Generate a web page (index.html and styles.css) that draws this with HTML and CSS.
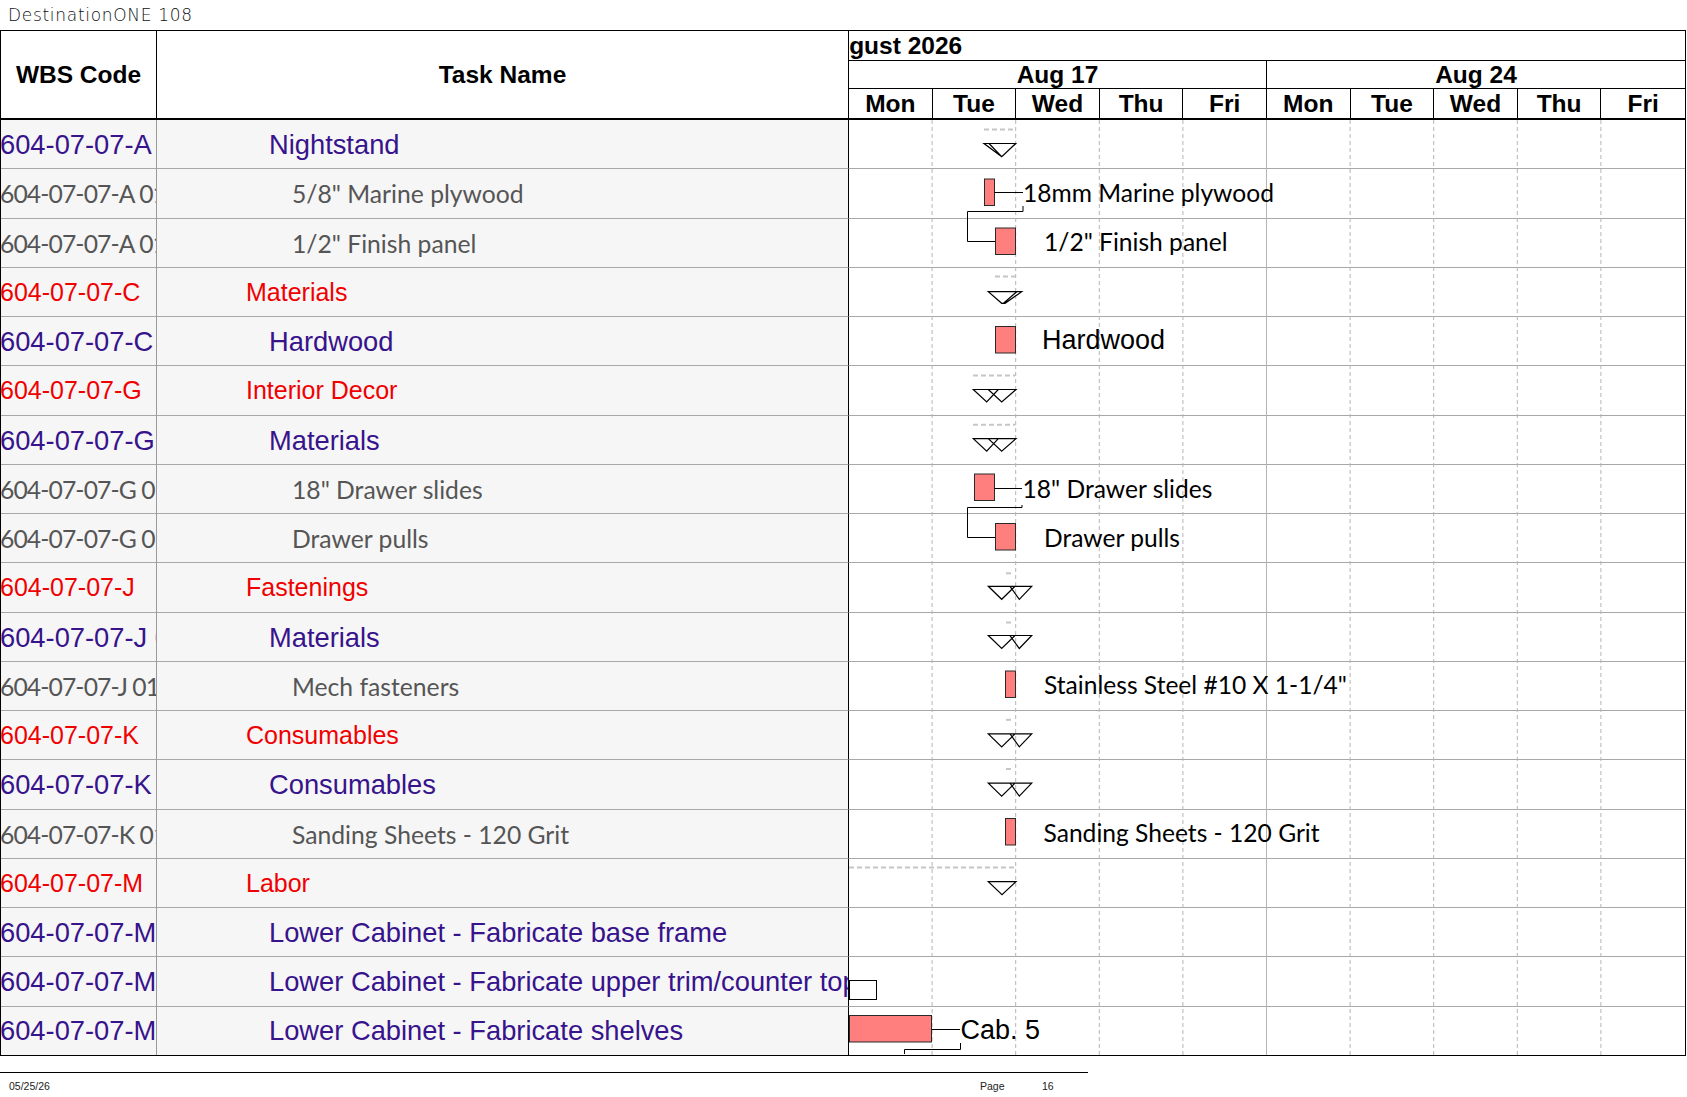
FILE: index.html
```html
<!DOCTYPE html>
<html>
<head>
<meta charset="utf-8">
<title>DestinationONE 108</title>
<link rel="stylesheet" href="styles.css">
</head>
<body>
<div class="title">DestinationONE 108</div>
<div class="sheet">
  <div class="head">
    <div class="h-cell h-wbs">WBS Code</div>
    <div class="h-cell h-task">Task Name</div>
    <div class="g-head">
      <div class="g-month"><span>August 2026</span></div>
      <div class="g-weeks"><div>Aug 17</div><div>Aug 24</div></div>
      <div class="g-days">
        <div>Mon</div><div>Tue</div><div>Wed</div><div>Thu</div><div>Fri</div>
        <div>Mon</div><div>Tue</div><div>Wed</div><div>Thu</div><div>Fri</div>
      </div>
    </div>
  </div>
  <div class="body">
    <div class="row lv3"><div class="c-wbs">604-07-07-A 01</div><div class="c-task">Nightstand</div><div class="c-gantt"></div></div>
    <div class="row lv4"><div class="c-wbs">604-07-07-A 01.01</div><div class="c-task">5/8" Marine plywood</div><div class="c-gantt"></div></div>
    <div class="row lv4"><div class="c-wbs">604-07-07-A 01.02</div><div class="c-task">1/2" Finish panel</div><div class="c-gantt"></div></div>
    <div class="row lv2"><div class="c-wbs">604-07-07-C</div><div class="c-task">Materials</div><div class="c-gantt"></div></div>
    <div class="row lv3"><div class="c-wbs">604-07-07-C 01</div><div class="c-task">Hardwood</div><div class="c-gantt"></div></div>
    <div class="row lv2"><div class="c-wbs">604-07-07-G</div><div class="c-task">Interior Decor</div><div class="c-gantt"></div></div>
    <div class="row lv3"><div class="c-wbs">604-07-07-G 01</div><div class="c-task">Materials</div><div class="c-gantt"></div></div>
    <div class="row lv4"><div class="c-wbs">604-07-07-G 01.01</div><div class="c-task">18" Drawer slides</div><div class="c-gantt"></div></div>
    <div class="row lv4"><div class="c-wbs">604-07-07-G 01.02</div><div class="c-task">Drawer pulls</div><div class="c-gantt"></div></div>
    <div class="row lv2"><div class="c-wbs">604-07-07-J</div><div class="c-task">Fastenings</div><div class="c-gantt"></div></div>
    <div class="row lv3"><div class="c-wbs">604-07-07-J 01</div><div class="c-task">Materials</div><div class="c-gantt"></div></div>
    <div class="row lv4"><div class="c-wbs">604-07-07-J 01.01</div><div class="c-task">Mech fasteners</div><div class="c-gantt"></div></div>
    <div class="row lv2"><div class="c-wbs">604-07-07-K</div><div class="c-task">Consumables</div><div class="c-gantt"></div></div>
    <div class="row lv3"><div class="c-wbs">604-07-07-K 01</div><div class="c-task">Consumables</div><div class="c-gantt"></div></div>
    <div class="row lv4"><div class="c-wbs">604-07-07-K 01.01</div><div class="c-task">Sanding Sheets - 120 Grit</div><div class="c-gantt"></div></div>
    <div class="row lv2"><div class="c-wbs">604-07-07-M</div><div class="c-task">Labor</div><div class="c-gantt"></div></div>
    <div class="row lv3"><div class="c-wbs">604-07-07-M 01</div><div class="c-task">Lower Cabinet - Fabricate base frame</div><div class="c-gantt"></div></div>
    <div class="row lv3"><div class="c-wbs">604-07-07-M 02</div><div class="c-task">Lower Cabinet - Fabricate upper trim/counter top</div><div class="c-gantt"></div></div>
    <div class="row lv3 last"><div class="c-wbs">604-07-07-M 03</div><div class="c-task">Lower Cabinet - Fabricate shelves</div><div class="c-gantt"></div></div>

    <svg class="chart" width="836" height="936" viewBox="0 0 836 936">
      <g class="grid-dash">
        <line x1="83.1" y1="1" x2="83.1" y2="936"/>
        <line x1="166.7" y1="1" x2="166.7" y2="936"/>
        <line x1="250.3" y1="1" x2="250.3" y2="936"/>
        <line x1="333.9" y1="1" x2="333.9" y2="936"/>
        <line x1="501.1" y1="1" x2="501.1" y2="936"/>
        <line x1="584.7" y1="1" x2="584.7" y2="936"/>
        <line x1="668.3" y1="1" x2="668.3" y2="936"/>
        <line x1="751.9" y1="1" x2="751.9" y2="936"/>
      </g>
      <line class="grid-solid" x1="417.5" y1="1" x2="417.5" y2="936"/>

      <!-- summary dashed progress -->
      <g class="sum-dash">
        <path d="M135 10.5 H166"/>
        <path d="M146 157.5 H166"/>
        <path d="M124 256.5 H166"/>
        <path d="M124 305.7 H166"/>
        <path d="M157 454.3 H165"/>
        <path d="M157 503.5 H165"/>
        <path d="M157 600.8 H165"/>
        <path d="M157 650 H165"/>
        <path d="M0 748.5 H166"/>
      </g>

      <!-- summary triangles -->
      <g class="tri">
        <path d="M135 24.5 H166.7 L152.7 37.7 Z M140 24.5 L152.7 37.7"/>
        <path d="M139.3 172.7 H172.7 L156 184.3 H152.7 Z M154.5 184.3 L167.7 172.7"/>
        <path d="M124.3 270.5 H149.3 L137.7 283 Z M139.3 270.5 H167 L152.7 283 Z"/>
        <path d="M124.3 319.7 H149.3 L137.7 332.2 Z M139.3 319.7 H167 L152.7 332.2 Z"/>
        <path d="M139.3 467.3 H166 L152.7 480.3 Z M161 467.3 H182.7 L170.3 480.3 Z"/>
        <path d="M139.3 516.5 H166 L152.7 529.5 Z M161 516.5 H182.7 L170.3 529.5 Z"/>
        <path d="M139.3 614.9 H166 L152.7 627.9 Z M161 614.9 H182.7 L170.3 627.9 Z"/>
        <path d="M139.3 664.1 H166 L152.7 677.1 Z M161 664.1 H182.7 L170.3 677.1 Z"/>
        <path d="M139.3 762.7 H167 L153 775.7 Z"/>
      </g>

      <!-- task bars -->
      <g class="bar">
        <rect x="135.5" y="60" width="10" height="26.5"/>
        <rect x="146.5" y="109" width="20" height="26.5"/>
        <rect x="146.5" y="207.5" width="20" height="26.5"/>
        <rect x="125.5" y="355" width="20" height="26.5"/>
        <rect x="146.5" y="404.5" width="20" height="26.5"/>
        <rect x="156.5" y="552" width="10" height="26.5"/>
        <rect x="156.5" y="699.5" width="10" height="26.5"/>
        <rect x="0.5" y="896.5" width="82" height="26.5"/>
      </g>
      <rect class="bar-empty" x="0.5" y="861.5" width="27" height="19"/>

      <!-- label leaders and links -->
      <g class="link">
        <path d="M145.5 73.5 H174"/>
        <path d="M174 87 V92.5 H118.5 V122.5 H146"/>
        <path d="M145.5 369.5 H173"/>
        <path d="M173 386 V388.5 H118.5 V418.5 H146"/>
        <path d="M82.5 910.5 H111"/>
        <path d="M111.5 924 V930.5 H55.5 V935"/>
      </g>

      <!-- bar labels -->
      <text class="lbl-c" x="174" y="83">18mm Marine plywood</text>
      <text class="lbl-c" x="195" y="132">1/2" Finish panel</text>
      <text class="lbl-a" x="193" y="229.5">Hardwood</text>
      <text class="lbl-c" x="173.5" y="379.3">18" Drawer slides</text>
      <text class="lbl-c" x="195" y="428">Drawer pulls</text>
      <text class="lbl-c" x="195" y="575.3">Stainless Steel #10 X 1-1/4"</text>
      <text class="lbl-c" x="194.5" y="723.3">Sanding Sheets - 120 Grit</text>
      <text class="lbl-a" x="111.5" y="919.5">Cab. 5</text>
    </svg>
  </div>
</div>
<div class="footer">
  <span class="f-date">05/25/26</span>
  <span class="f-page">Page</span>
  <span class="f-num">16</span>
</div>
</body>
</html>
```

FILE: styles.css
```css
html, body {
  margin: 0;
  padding: 0;
  background: #ffffff;
}

body {
  width: 1687px;
  font-family: "Liberation Sans", Arial, sans-serif;
  color: #000;
}

.title {
  height: 29px;
  padding-top: 1px;
  padding-left: 8px;
  line-height: 29px;
  font-family: "DejaVu Sans", "Lato", sans-serif;
  font-weight: 200;
  font-size: 17px;
  letter-spacing: 0.7px;
  color: #111;
  white-space: nowrap;
}

.sheet {
  box-sizing: border-box;
  width: 1686px;
  border: 1px solid #000;
}

/* ---------- header ---------- */
.head {
  display: grid;
  grid-template-columns: 156px 692px 836px;
  height: 87px;
  border-bottom: 2px solid #000;
}

.h-cell {
  display: flex;
  align-items: center;
  justify-content: center;
  font-weight: bold;
  font-size: 24.5px;
  border-right: 1px solid #000;
  background: #fff;
}

.g-head {
  display: grid;
  grid-template-rows: 30px 28px 29px;
  font-weight: bold;
  font-size: 24.5px;
}

.g-month {
  box-sizing: border-box;
  border-bottom: 1px solid #000;
  overflow: hidden;
  white-space: nowrap;
  line-height: 29px;
}

.g-month span {
  display: block;
  text-indent: -32.5px;
}

.g-weeks {
  display: grid;
  grid-template-columns: 1fr 1fr;
  box-sizing: border-box;
  border-bottom: 1px solid #000;
}

.g-weeks div {
  text-align: center;
  line-height: 28px;
}

.g-weeks div:first-child {
  border-right: 1px solid #000;
}

.g-days {
  display: grid;
  grid-template-columns: repeat(10, 1fr);
}

.g-days div {
  text-align: center;
  line-height: 29px;
  border-right: 1px solid #000;
}

.g-days div:last-child {
  border-right: none;
}

/* ---------- body rows ---------- */
.body {
  position: relative;
}

.row {
  display: grid;
  grid-template-columns: 156px 692px 836px;
  height: 49.25px;
}

.row.last {
  height: 48px;
}

.row > div {
  box-sizing: border-box;
  border-bottom: 1px solid #a8a8a8;
  overflow: hidden;
  white-space: nowrap;
  line-height: 49px;
  font-size: 27.3px;
}

.row.last > div {
  border-bottom: none;
  line-height: 48px;
}

.c-wbs {
  background: #f6f6f6;
  border-right: 1px solid #9a9a9a;
  text-indent: -1px;
}

.c-task {
  background: #f6f6f6;
  border-right: 1px solid #000;
}

.c-gantt {
  background: #fff;
}

.lv2 > div {
  color: #f00000;
  font-size: 25px;
}

.lv2 .c-task {
  padding-left: 89px;
}

.lv3 > div {
  color: #37138c;
}

.lv3 .c-task {
  padding-left: 112px;
}

.lv4 > div {
  color: #555555;
  font-family: "Lato", "Open Sans", sans-serif;
  font-size: 24.7px;
}

.lv4 .c-task {
  padding-left: 135px;
}

.lv4 .c-wbs {
  letter-spacing: -0.9px;
}

/* ---------- gantt chart canvas ---------- */
.chart {
  position: absolute;
  left: 848px;
  top: -1px;
  overflow: visible;
  pointer-events: none;
}

.grid-dash line {
  stroke: #b4b4b4;
  stroke-width: 1;
  stroke-dasharray: 4 3;
}

.grid-solid {
  stroke: #b4b4b4;
  stroke-width: 1;
}

.sum-dash path {
  stroke: #c6c6c6;
  stroke-width: 2;
  stroke-dasharray: 5 3;
  fill: none;
}

.tri path {
  fill: none;
  stroke: #000;
  stroke-width: 1.2;
  stroke-linejoin: miter;
}

.bar rect {
  fill: #ff7f7f;
  stroke: #2a2a2a;
  stroke-width: 1;
}

.bar-empty {
  fill: #fff;
  stroke: #000;
  stroke-width: 1;
}

.link path {
  fill: none;
  stroke: #000;
  stroke-width: 1;
}

.lbl-c {
  font-family: "Lato", "Open Sans", sans-serif;
  font-size: 24.6px;
  fill: #000;
}

.lbl-a {
  font-family: "Liberation Sans", Arial, sans-serif;
  font-size: 27px;
  fill: #000;
}

/* ---------- footer ---------- */
.footer {
  display: flex;
  width: 1079px;
  margin-top: 16px;
  padding-top: 7px;
  padding-left: 9px;
  border-top: 1px solid #000;
  font-family: "Liberation Sans", Arial, sans-serif;
  font-size: 10.5px;
  line-height: 12px;
  color: #222;
}

.f-date {
  width: 971px;
}

.f-page {
  width: 62px;
}
```
